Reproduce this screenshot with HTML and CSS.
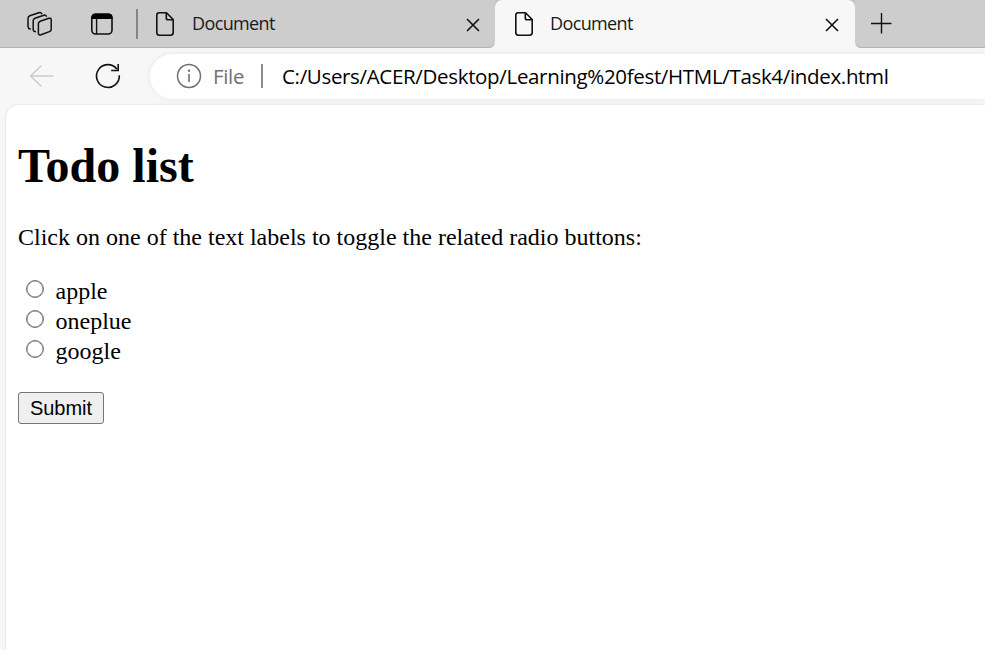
FILE: index.html
```html
<!DOCTYPE html>
<html lang="en">
<head>
<meta charset="utf-8">
<title>Document</title>
<link rel="stylesheet" href="styles.css">
</head>
<body>
<header class="tabstrip">
  <div class="strip-left">
    <svg class="icon workspaces" width="28" height="28" viewBox="0 0 28 28"><g fill="none" stroke="#111" stroke-width="1.5" stroke-linejoin="round" stroke-linecap="round"><path d="M14.2 11.2 22.9 8.3Q25.2 7.7 25.2 10V19.2Q25.2 21 23.4 21.6L15 24.7Q12.4 25.5 12.4 23V13.6Q12.4 11.8 14.2 11.2Z"/><path d="M9.4 21.7Q7.2 21.3 7.2 19.2V10.6Q7.2 8.8 9 8.2L17.8 5.2Q19.8 4.7 20.4 6.2"/><path d="M4.2 19Q2 18.4 2 16.4V8.4Q2 6.4 3.8 5.8L12.8 2.7Q15 2.1 15.7 3.8"/></g></svg>
    <svg class="icon actions" width="24" height="24" viewBox="0 0 24 24"><rect x="1.8" y="2.2" width="20.2" height="19.8" rx="3.8" fill="none" stroke="#111" stroke-width="1.6"/><path d="M1.5 7V5.5Q1.5 1.5 5.5 1.5H18.5Q22.5 1.5 22.5 5.5V7Z"/><path d="M6.6 7V22" stroke="#111" stroke-width="1.4"/></svg>
    <span class="separator"></span>
    <div class="tab">
      <svg class="page-icon" width="20" height="26" viewBox="0 0 20 26"><path d="M4.2 1.8H11.5L18.2 8.5V21.6Q18.2 24.2 15.6 24.2H4.2Q1.8 24.2 1.8 21.6V4.2Q1.8 1.8 4.2 1.8ZM11.3 1.8V7Q11.3 8.8 13.1 8.8H18.2" fill="none" stroke="#111" stroke-width="1.6" stroke-linejoin="round"/></svg>
      <span class="tab-title">Document</span>
      <svg class="close" width="14" height="14" viewBox="0 0 14 14"><path d="M1 1 13 13M13 1 1 13" stroke="#111" stroke-width="1.6"/></svg>
    </div>
  </div>
  <div class="active-wrap">
    <div class="tab active">
      <svg class="page-icon" width="20" height="26" viewBox="0 0 20 26"><path d="M4.2 1.8H11.5L18.2 8.5V21.6Q18.2 24.2 15.6 24.2H4.2Q1.8 24.2 1.8 21.6V4.2Q1.8 1.8 4.2 1.8ZM11.3 1.8V7Q11.3 8.8 13.1 8.8H18.2" fill="none" stroke="#111" stroke-width="1.6" stroke-linejoin="round"/></svg>
      <span class="tab-title">Document</span>
      <svg class="close" width="14" height="14" viewBox="0 0 14 14"><path d="M1 1 13 13M13 1 1 13" stroke="#111" stroke-width="1.6"/></svg>
    </div>
  </div>
  <div class="strip-right">
    <svg class="plus" width="22" height="22" viewBox="0 0 22 22"><path d="M11.5 1V21.5M1 11.5H21.5" stroke="#111" stroke-width="1.4"/></svg>
  </div>
</header>
<nav class="toolbar">
  <svg class="back" width="26" height="24" viewBox="0 0 26 24"><path d="M12.3 1.8 1.5 12 12.3 22.2M1.5 12H24.5" fill="none" stroke="#ccc" stroke-width="1.5"/></svg>
  <svg class="reload" width="28" height="28" viewBox="0 0 28 28"><path d="M25.3 13.3A11.4 11.4 0 1 1 22.8 6.9M24.2 2V8.5H17.2" fill="none" stroke="#111" stroke-width="1.6"/></svg>
  <div class="address">
    <svg class="info" width="26" height="26" viewBox="0 0 26 26"><circle cx="13" cy="13" r="11.5" fill="none" stroke="#707070" stroke-width="1.5"/><path d="M13 11V19" stroke="#707070" stroke-width="1.6"/><circle cx="13" cy="7.8" r="1.2" fill="#707070"/></svg>
    <span class="scheme">File</span>
    <span class="divider"></span>
    <span class="url">C:/Users/ACER/Desktop/Learning%20fest/HTML/Task4/index.html</span>
  </div>
</nav>
<main class="page">
  <h1>Todo list</h1>
  <p class="intro">Click on one of the text labels to toggle the related radio buttons:</p>
  <form>
    <div class="option"><input type="radio" id="apple" name="item"><label for="apple">apple</label></div>
    <div class="option"><input type="radio" id="oneplue" name="item"><label for="oneplue">oneplue</label></div>
    <div class="option"><input type="radio" id="google" name="item"><label for="google">google</label></div>
    <button class="submit" type="button">Submit</button>
  </form>
</main>
</body>
</html>
```
FILE: styles.css
```css
* { box-sizing: border-box; }
body {
  margin: 0;
  height: 650px;
  overflow: hidden;
  display: flex;
  flex-direction: column;
  background: #f7f7f7;
  color: #000;
  font-family: "Open Sans", "Noto Sans", sans-serif;
}
svg { display: block; flex: none; }
.tabstrip { display: flex; height: 48px; flex: none; }
.strip-left, .strip-right {
  display: flex;
  align-items: center;
  background: #cdcdcd;
  box-shadow: inset 0 -2px 1px -1px #b2b2b2;
}
.strip-left { width: 495px; border-radius: 0 0 6px 0; }
.strip-right { flex: 1; border-radius: 0 0 0 6px; padding-left: 15px; }
.workspaces { margin-left: 26px; }
.actions { margin-left: 36px; }
.separator { width: 2px; height: 30px; margin-left: 22px; background: #858585; }
.tab { display: flex; align-items: center; flex: 1; height: 48px; padding: 0 15px 0 17px; }
.tab-title {
  flex: 1;
  margin: -2px 0 0 17px;
  font-size: 18px;
  line-height: 24px;
  letter-spacing: -0.62px;
  color: #1a1a1a;
}
.close { margin-top: 2px; }
.active-wrap { width: 360px; background: linear-gradient(#c4c4c4 10px, #f7f7f7 10px); }
.active { border-radius: 7px 7px 0 0; background: #f7f7f7; padding: 0 16px 0 19px; }
.active .tab-title { margin-left: 16px; }
.plus { margin-top: -2px; }
.toolbar { display: flex; align-items: center; height: 57px; flex: none; padding-bottom: 2px; }
.back { margin-left: 29px; }
.reload { margin-left: 39px; }
.address {
  display: flex;
  align-items: center;
  flex: 1;
  height: 45px;
  margin: 1px 0 0 28px;
  padding-left: 26px;
  background: #fff;
  border-radius: 23px 0 0 23px;
  box-shadow: 0 0 5px #e6e6e6;
  font-size: 20.5px;
  letter-spacing: -0.33px;
  white-space: nowrap;
}
.scheme { width: 32px; margin-left: 11px; color: #707070; }
.divider { width: 2px; height: 24px; margin-left: 16px; background: #8c8c8c; }
.url { margin-left: 19px; }
.page {
  flex: 1;
  margin-left: 6px;
  padding: 0 12px;
  background: #fff;
  border-radius: 12px 0 0 0;
  box-shadow: 0 0 2px #c8c8c8;
  font-family: "Liberation Serif", serif;
  font-size: 24px;
}
h1 { margin: 33px 0 0; font-size: 48px; line-height: 56px; }
.intro { margin: 29px 0 0; line-height: 28px; }
form { margin-top: 25px; }
.option { display: flex; height: 30px; line-height: 30px; }
.option input {
  appearance: none;
  width: 18px;
  height: 18px;
  margin: 4px 11.5px 0 8px;
  border: 1px solid #767676;
  border-radius: 50%;
  background: #fff;
  box-shadow: inset 0 0 0 0.5px #767676;
}
.submit {
  display: block;
  width: 86px;
  height: 32px;
  margin-top: 26px;
  padding: 0;
  border: 1px solid #767676;
  border-radius: 3px;
  background: #efefef;
  color: #000;
  font: 20px "Liberation Sans", sans-serif;
}
```
